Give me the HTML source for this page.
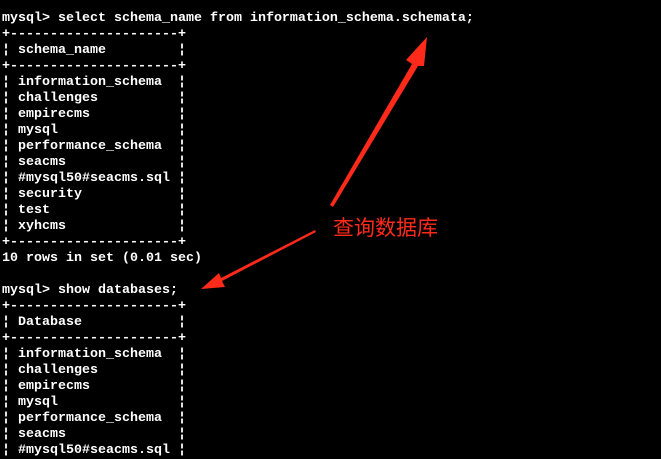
<!DOCTYPE html>
<html><head><meta charset="utf-8"><style>
html,body{margin:0;padding:0;background:#000;width:661px;height:458px;overflow:hidden}
pre{position:absolute;left:2px;top:11px;margin:0;font-family:"Liberation Mono",monospace;font-size:13.33px;line-height:16px;color:#fff;font-weight:bold;white-space:pre}
.t{position:absolute;left:333px;top:215px;font-family:"Noto Sans CJK SC",sans-serif;font-size:21px;line-height:24px;color:#ff2a1a}
svg{position:absolute;left:0;top:0}
</style></head><body>
<pre>mysql&gt; select schema_name from information_schema.schemata;
+---------------------+
¦ schema_name         ¦
+---------------------+
¦ information_schema  ¦
¦ challenges          ¦
¦ empirecms           ¦
¦ mysql               ¦
¦ performance_schema  ¦
¦ seacms              ¦
¦ #mysql50#seacms.sql ¦
¦ security            ¦
¦ test                ¦
¦ xyhcms              ¦
+---------------------+
10 rows in set (0.01 sec)

mysql&gt; show databases;
+---------------------+
¦ Database            ¦
+---------------------+
¦ information_schema  ¦
¦ challenges          ¦
¦ empirecms           ¦
¦ mysql               ¦
¦ performance_schema  ¦
¦ seacms              ¦
¦ #mysql50#seacms.sql ¦</pre>
<div class="t">查询数据库</div>
<svg width="661" height="458">
<polygon points="330,205 412,64 406,60 427,37 424,66 418,66 333,207" fill="#ff2a1a"/>
<polygon points="316,232 222,281 225,287 201,289 219,273 221,278 315,230" fill="#ff2a1a"/>
</svg>
</body></html>
